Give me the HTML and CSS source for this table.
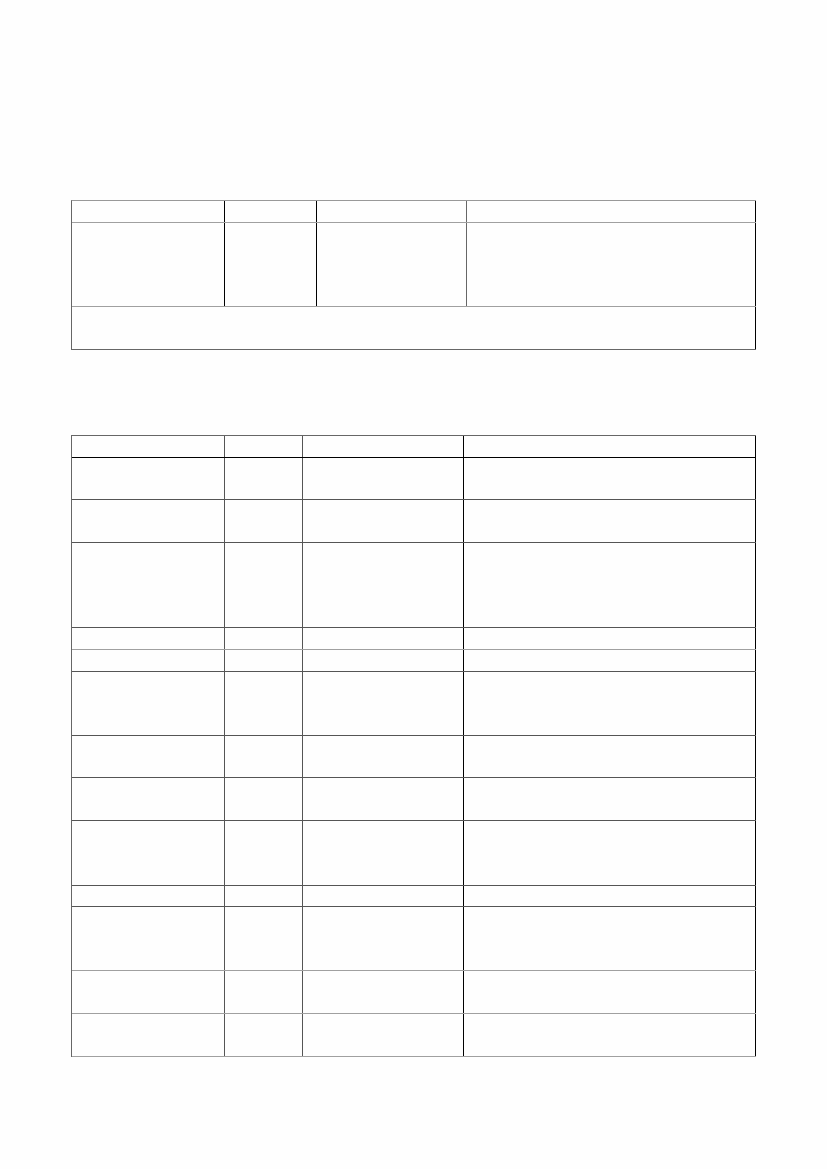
FILE: index.html
```html
<!DOCTYPE html>
<html lang="en">
<head>
<meta charset="utf-8">
<title>Tables</title>
<link rel="stylesheet" href="styles.css">
</head>
<body>
<main class="page">
  <section class="sheet sheet-one">
    <div class="row h22 b-light">
      <div class="cell c-black"></div><div class="cell c-black"></div><div class="cell c-mid"></div><div class="cell c-black"></div>
    </div>
    <div class="row h84 b-light">
      <div class="cell c-black"></div><div class="cell c-black"></div><div class="cell c-mid"></div><div class="cell c-black"></div>
    </div>
    <div class="row h43 b-mid full">
      <div class="cell span c-black"></div>
    </div>
  </section>

  <section class="sheet sheet-two">
    <div class="row h22 b-black"><div class="cell"></div><div class="cell"></div><div class="cell c-black"></div><div class="cell c-black"></div></div>
    <div class="row h42 b-dark"><div class="cell"></div><div class="cell"></div><div class="cell c-black"></div><div class="cell c-black"></div></div>
    <div class="row h43 b-dark"><div class="cell"></div><div class="cell"></div><div class="cell c-black"></div><div class="cell c-black"></div></div>
    <div class="row h85 b-dark"><div class="cell"></div><div class="cell"></div><div class="cell c-black"></div><div class="cell c-black"></div></div>
    <div class="row h22 b-light"><div class="cell"></div><div class="cell"></div><div class="cell c-black"></div><div class="cell c-black"></div></div>
    <div class="row h22 b-dark"><div class="cell"></div><div class="cell"></div><div class="cell c-black"></div><div class="cell c-black"></div></div>
    <div class="row h64 b-dark"><div class="cell"></div><div class="cell"></div><div class="cell c-black"></div><div class="cell c-black"></div></div>
    <div class="row h42 b-dark"><div class="cell"></div><div class="cell"></div><div class="cell c-black"></div><div class="cell c-black"></div></div>
    <div class="row h43 b-dark"><div class="cell"></div><div class="cell"></div><div class="cell c-black"></div><div class="cell c-black"></div></div>
    <div class="row h65 b-dark"><div class="cell"></div><div class="cell"></div><div class="cell c-black"></div><div class="cell c-black"></div></div>
    <div class="row h21 b-dark"><div class="cell"></div><div class="cell"></div><div class="cell c-black"></div><div class="cell c-black"></div></div>
    <div class="row h64 b-light"><div class="cell"></div><div class="cell"></div><div class="cell c-black"></div><div class="cell c-black"></div></div>
    <div class="row h43 b-light"><div class="cell"></div><div class="cell"></div><div class="cell c-black"></div><div class="cell c-black"></div></div>
    <div class="row h43 b-light"><div class="cell"></div><div class="cell"></div><div class="cell c-black"></div><div class="cell c-black"></div></div>
  </section>
</main>
</body>
</html>
```

FILE: styles.css
```css
html, body {
  margin: 0;
  padding: 0;
  background: #fefefe;
  font-family: "Liberation Sans", Arial, sans-serif;
}

.page {
  padding: 200px 0 0 71px;
}

.sheet {
  width: 685px;
  box-sizing: border-box;
  border-left: 1px solid #666;
}

.sheet-one {
  border-top: 1px solid #999;
}

.sheet-two {
  margin-top: 85px;
  border-top: 1px solid #666;
}

.row {
  display: grid;
  box-sizing: border-box;
  border-bottom: 1px solid #555;
}

.sheet-one .row {
  grid-template-columns: 153px 92px 150px 289px;
}

.sheet-two .row {
  grid-template-columns: 153px 78px 161px 292px;
}

.sheet-one .row.full {
  grid-template-columns: 684px;
}

.cell {
  box-sizing: border-box;
  border-right: 1px solid #555;
}

.c-black { border-right-color: #000; }
.c-mid { border-right-color: #666; }

.b-black { border-bottom-color: #000; }
.b-dark { border-bottom-color: #555; }
.b-mid { border-bottom-color: #666; }
.b-light { border-bottom-color: #a0a0a0; }

.h21 { height: 21px; }
.h22 { height: 22px; }
.h42 { height: 42px; }
.h43 { height: 43px; }
.h64 { height: 64px; }
.h65 { height: 65px; }
.h84 { height: 84px; }
.h85 { height: 85px; }
```
